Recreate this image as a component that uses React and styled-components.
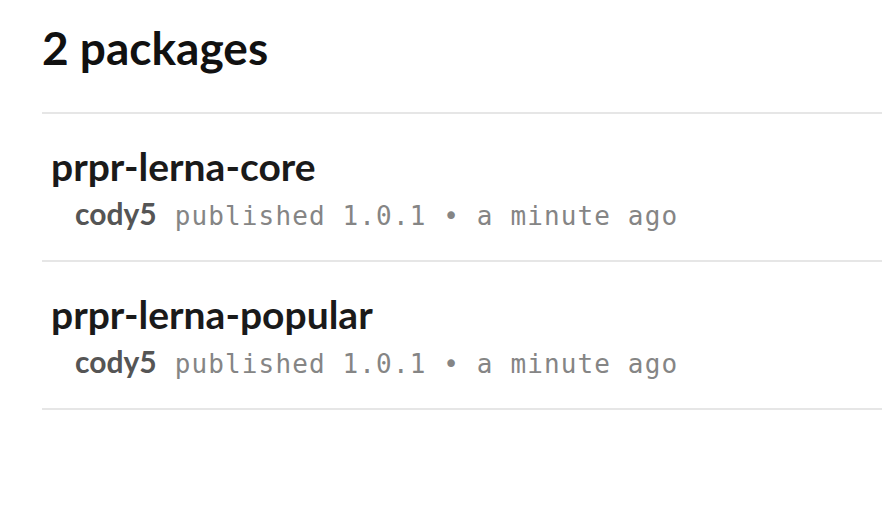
import React from "react";
import styled, { createGlobalStyle } from "styled-components";

const Global = createGlobalStyle`
  html, body { margin: 0; padding: 0; background: #fff; }
  body { font-family: "Lato", "Noto Sans", sans-serif; }
`;

const Page = styled.main`
  padding: 18px 0 0 42px;
  width: 882px;
  box-sizing: border-box;
`;

const Heading = styled.h2`
  margin: 0 0 34px 0;
  font-family: "Lato", sans-serif;
  font-weight: 700;
  font-size: 46px;
  line-height: 60px;
  color: #111;
`;

const List = styled.ul`
  list-style: none;
  margin: 0;
  padding: 0;
  border-top: 2px solid #e6e6e6;
`;

const Item = styled.li`
  padding: 29px 0 23px 9px;
  border-bottom: 2px solid #e6e6e6;
`;

const Name = styled.a`
  display: block;
  font-family: "Lato", sans-serif;
  font-weight: 700;
  font-size: 39px;
  line-height: 46px;
  color: #1a1a1a;
  text-decoration: none;
`;

const Meta = styled.div`
  margin-top: 3px;
  padding-left: 24px;
  display: flex;
  align-items: baseline;
  gap: 18px;
  line-height: 42px;
`;

const Publisher = styled.span`
  font-family: "Lato", sans-serif;
  font-weight: 700;
  font-size: 30px;
  color: #555;
`;

const Detail = styled.span`
  font-family: "DejaVu Sans Mono", "Liberation Mono", monospace;
  font-size: 26px;
  letter-spacing: 1.13px;
  color: #858585;
`;

const packages = [
  { name: "prpr-lerna-core", user: "cody5", version: "1.0.1", when: "a minute ago" },
  { name: "prpr-lerna-popular", user: "cody5", version: "1.0.1", when: "a minute ago" },
];

export default function App() {
  return (
    <>
      <Global />
      <Page>
        <Heading>{packages.length} packages</Heading>
        <List>
          {packages.map((p) => (
            <Item key={p.name}>
              <Name href="#">{p.name}</Name>
              <Meta>
                <Publisher>{p.user}</Publisher>
                <Detail>published {p.version} • {p.when}</Detail>
              </Meta>
            </Item>
          ))}
        </List>
      </Page>
    </>
  );
}
